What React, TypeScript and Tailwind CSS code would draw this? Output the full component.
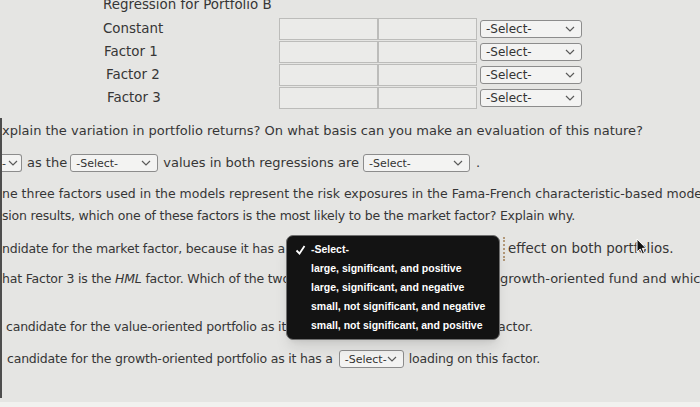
import React from "react";

function Chevron() {
  return (
    <svg width="10" height="6" viewBox="0 0 10 6" className="shrink-0">
      <path d="M1 1l4 4 4-4" stroke="#5a5a5a" strokeWidth="1.2" fill="none" />
    </svg>
  );
}

function Sel({ className = "", text = "-Select-" }: { className?: string; text?: string }) {
  return (
    <span
      className={`inline-flex shrink-0 items-center justify-between h-[18px] border border-[#8c8c8c] rounded-[3px] bg-[#f3f3f2] pl-[5px] pr-[6px] text-[11px] tracking-normal leading-none text-[#333] ${className}`}
    >
      <span>{text}</span>
      <Chevron />
    </span>
  );
}

const rows = [
  { label: "Constant", pad: "pl-0" },
  { label: "Factor 1", pad: "pl-[1px]" },
  { label: "Factor 2", pad: "pl-[3px]" },
  { label: "Factor 3", pad: "pl-[4px]" },
];

const menuItems = [
  "large, significant, and positive",
  "large, significant, and negative",
  "small, not significant, and negative",
  "small, not significant, and positive",
];

export default function App() {
  return (
    <div className="relative w-[700px] h-[407px] overflow-hidden bg-[#e5e5e3] font-['DejaVu_Sans',sans-serif] text-[12.5px] tracking-[-0.2px] text-[#363636]">
      {/* Regression table */}
      <div className="pl-[103px] text-[13.4px] tracking-normal">
        <div className="mt-[-3px] h-[16px] leading-[16px]">Regression for Portfolio B</div>
        <div className="mt-[5px] flex flex-col gap-px">
          {rows.map((r) => (
            <div key={r.label} className="flex items-center h-[22px]">
              <div className={`w-[176px] ${r.pad}`}>{r.label}</div>
              <div className="w-[99px] h-[22px] border border-[#bcbcba] bg-[#ebebe9]" />
              <div className="w-[99px] h-[22px] border border-[#bcbcba] bg-[#ebebe9]" />
              <Sel className="ml-[3px] w-[102px] text-[12px]" />
            </div>
          ))}
        </div>
      </div>

      {/* Questions */}
      <div className="mt-[9px] h-[280px] border-l-2 border-[#4d4d4d] whitespace-nowrap">
        <div className="pt-[4px] h-[22px] leading-[18px] text-[13px] tracking-normal">
          xplain the variation in portfolio returns? On what basis can you make an evaluation of this nature?
        </div>

        <div className="mt-[14px] flex items-center h-[18px] text-[13px] tracking-normal">
          <span className="inline-flex items-center justify-between w-[20px] h-[18px] border border-l-0 border-[#8c8c8c] rounded-r-[3px] bg-[#f3f3f2] pr-[3px] text-[11px] leading-none">
            <span>-</span>
            <Chevron />
          </span>
          <span className="ml-[5px]">as the</span>
          <Sel className="ml-[3px] w-[88px]" />
          <span className="ml-[5px]">values in both regressions are</span>
          <Sel className="ml-[4px] w-[107px]" />
          <span className="ml-[6px]">.</span>
        </div>

        <div className="mt-[13px] h-[18px] leading-[18px] tracking-normal">
          ne three factors used in the models represent the risk exposures in the Fama-French characteristic-based models
        </div>
        <div className="mt-[4px] h-[18px] leading-[18px]">
          sion results, which one of these factors is the most likely to be the market factor? Explain why.
        </div>

        <div className="mt-[15px] flex items-center h-[18px]">
          <span className="shrink-0 w-[284px] overflow-hidden">ndidate for the market factor, because it has a</span>
          <span className="shrink-0 w-[219px] h-[24px] border-r-2 border-dotted border-[#b39878]" />
          <span className="ml-[3px] text-[13.4px] tracking-normal">effect on both portfolios.</span>
        </div>

        <div className="mt-[12px] flex items-center h-[18px]">
          <span className="shrink-0 w-[498px] overflow-hidden">
            hat Factor 3 is the <i>HML</i> factor. Which of the two portfolios is the value-oriented fund and which
          </span>
          <span className="text-[13px] tracking-normal">growth-oriented fund and which</span>
        </div>

        <div className="mt-[30px] flex items-center h-[18px]">
          <span className="shrink-0 w-[496px] pl-[4px] overflow-hidden">
            candidate for the value-oriented portfolio as it has a large loading on this factor.
          </span>
          <span className="tracking-normal">actor.</span>
        </div>

        <div className="mt-[14px] flex items-center h-[18px] pl-[5px]">
          <span>candidate for the growth-oriented portfolio as it has a</span>
          <Sel className="ml-[6px] w-[65px]" />
          <span className="ml-[5px]">loading on this factor.</span>
        </div>
      </div>
      <div className="mt-[4px] h-[10px] bg-[#f1f1ef]" />

      {/* Open dropdown menu */}
      <div className="absolute left-[286px] top-[235px] w-[214px] h-[105px] rounded-[7px] bg-[#131313] border border-[#707070] shadow-lg pt-[4px] font-['Liberation_Sans',Arial,sans-serif] text-[10.5px] font-bold tracking-normal text-white">
        <div className="flex items-center h-[19px]">
          <span className="w-[24px] flex justify-center pl-[2px]">
            <svg width="11" height="10" viewBox="0 0 11 10">
              <path d="M1.5 5.5l3 3 5-7.5" stroke="#fff" strokeWidth="1.8" fill="none" />
            </svg>
          </span>
          <span>-Select-</span>
        </div>
        {menuItems.map((m) => (
          <div key={m} className="flex items-center h-[19px] pl-[24px]">
            {m}
          </div>
        ))}
      </div>

      {/* Mouse cursor */}
      <svg className="absolute left-[636px] top-[238px]" width="12" height="18" viewBox="0 0 12 18">
        <path d="M1 1v13l3.2-3 2.3 5.2 2-.9-2.2-5H10z" fill="#111" stroke="#fff" strokeWidth="1" />
      </svg>
    </div>
  );
}
